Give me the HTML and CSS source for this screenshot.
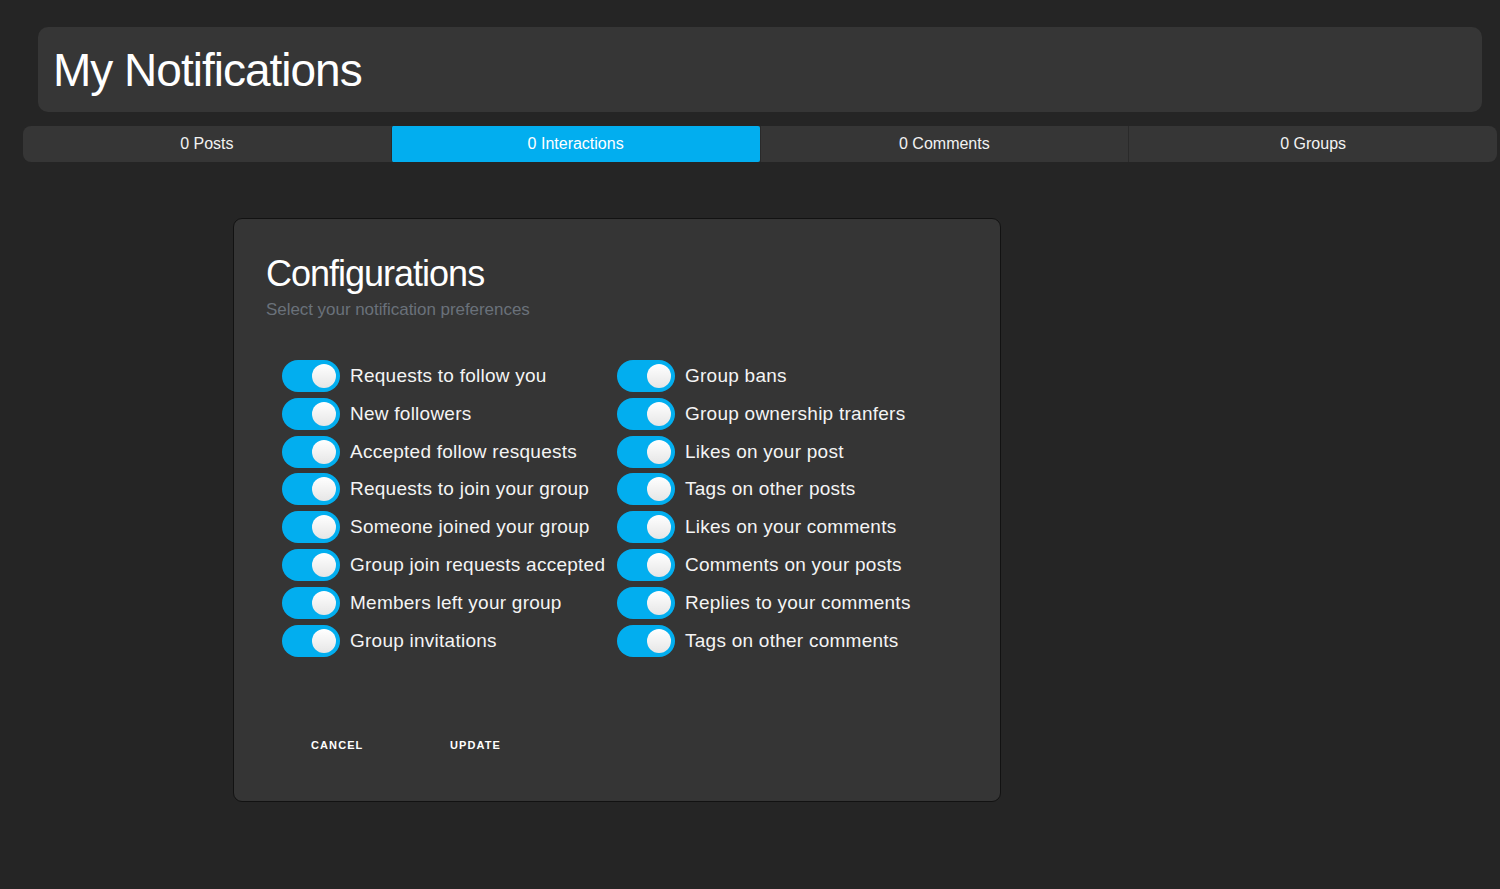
FILE: index.html
```html
<!DOCTYPE html>
<html>
<head>
<meta charset="utf-8">
<link rel="stylesheet" href="styles.css">
</head>
<body>
<div class="page">
  <header class="head-card"><h1>My Notifications</h1></header>
  <nav class="tabs">
    <div class="tab">0 Posts</div>
    <div class="tab active">0 Interactions</div>
    <div class="tab">0 Comments</div>
    <div class="tab">0 Groups</div>
  </nav>
  <section class="config">
    <h2>Configurations</h2>
    <p class="sub">Select your notification preferences</p>
    <div class="grid">
      <div class="col">
        <label class="row"><span class="sw"><span class="knob"></span></span><span class="lbl">Requests to follow you</span></label>
        <label class="row"><span class="sw"><span class="knob"></span></span><span class="lbl">New followers</span></label>
        <label class="row"><span class="sw"><span class="knob"></span></span><span class="lbl">Accepted follow resquests</span></label>
        <label class="row"><span class="sw"><span class="knob"></span></span><span class="lbl">Requests to join your group</span></label>
        <label class="row"><span class="sw"><span class="knob"></span></span><span class="lbl">Someone joined your group</span></label>
        <label class="row"><span class="sw"><span class="knob"></span></span><span class="lbl">Group join requests accepted</span></label>
        <label class="row"><span class="sw"><span class="knob"></span></span><span class="lbl">Members left your group</span></label>
        <label class="row"><span class="sw"><span class="knob"></span></span><span class="lbl">Group invitations</span></label>
      </div>
      <div class="col">
        <label class="row"><span class="sw"><span class="knob"></span></span><span class="lbl">Group bans</span></label>
        <label class="row"><span class="sw"><span class="knob"></span></span><span class="lbl">Group ownership tranfers</span></label>
        <label class="row"><span class="sw"><span class="knob"></span></span><span class="lbl">Likes on your post</span></label>
        <label class="row"><span class="sw"><span class="knob"></span></span><span class="lbl">Tags on other posts</span></label>
        <label class="row"><span class="sw"><span class="knob"></span></span><span class="lbl">Likes on your comments</span></label>
        <label class="row"><span class="sw"><span class="knob"></span></span><span class="lbl">Comments on your posts</span></label>
        <label class="row"><span class="sw"><span class="knob"></span></span><span class="lbl">Replies to your comments</span></label>
        <label class="row"><span class="sw"><span class="knob"></span></span><span class="lbl">Tags on other comments</span></label>
      </div>
    </div>
    <div class="actions">
      <button class="btn">Cancel</button>
      <button class="btn">Update</button>
    </div>
  </section>
</div>
</body>
</html>
```

FILE: styles.css
```css
* { box-sizing: border-box; }
html, body { margin: 0; padding: 0; }
body {
  background: #252525;
  color: #fff;
  font-family: "Liberation Sans", Arial, sans-serif;
  width: 1500px;
  height: 889px;
  overflow: hidden;
}
.page { padding-top: 27px; }
.head-card {
  margin: 0 18px 0 38px;
  height: 85px;
  background: #363636;
  border-radius: 10px;
  display: flex;
  align-items: center;
  padding-left: 15px;
}
.head-card h1 {
  margin: 0;
  font-weight: 400;
  font-size: 46px;
  letter-spacing: -1px;
}
.tabs {
  margin: 14px 3px 0 23px;
  height: 36px;
  display: flex;
  background: #363636;
  border-radius: 8px;
}
.tab {
  flex: 1;
  display: flex;
  align-items: center;
  justify-content: center;
  font-size: 16px;
  color: #f2f2f2;
  border-left: 1px solid #2a2a2a;
}
.tab:first-child { border-left: none; border-radius: 8px 0 0 8px; }
.tab:last-child { border-radius: 0 8px 8px 0; }
.tab.active {
  background: #02aeef;
  border-radius: 2px;
  border-left: 1px solid #2a2a2a;
  color: #fff;
}
.config {
  margin: 56px 0 0 233px;
  width: 768px;
  height: 584px;
  background: #353535;
  border: 1px solid #121212;
  border-radius: 9px;
  padding: 34px 0 0 32px;
}
.config h2 {
  margin: 0;
  font-weight: 400;
  font-size: 36px;
  letter-spacing: -1px;
  line-height: 42px;
}
.sub {
  margin: 5px 0 0;
  font-size: 17px;
  color: #6a717a;
  letter-spacing: -0.05px;
}
.grid {
  display: flex;
  margin: 40px 0 0 16px;
}
.col {
  width: 335px;
  display: flex;
  flex-direction: column;
  gap: 5.8px;
}
.row {
  display: flex;
  align-items: center;
  height: 32px;
}
.sw {
  width: 58px;
  height: 32px;
  border-radius: 16px;
  background: #02aeef;
  position: relative;
  flex: none;
}
.knob {
  position: absolute;
  right: 4px;
  top: 4px;
  width: 24px;
  height: 24px;
  border-radius: 50%;
  background: linear-gradient(#ffffff, #e6e6e6);
}
.lbl {
  margin-left: 10px;
  font-size: 19px;
  letter-spacing: 0.25px;
  color: #f4f4f4;
  white-space: nowrap;
}
.actions {
  display: flex;
  margin: 76px 0 0 45px;
}
.btn {
  background: none;
  border: none;
  color: #fff;
  font-family: "Liberation Sans", Arial, sans-serif;
  font-weight: 700;
  font-size: 11px;
  letter-spacing: 1.1px;
  text-transform: uppercase;
  padding: 6px 0;
  width: 139px;
  text-align: left;
}
```
